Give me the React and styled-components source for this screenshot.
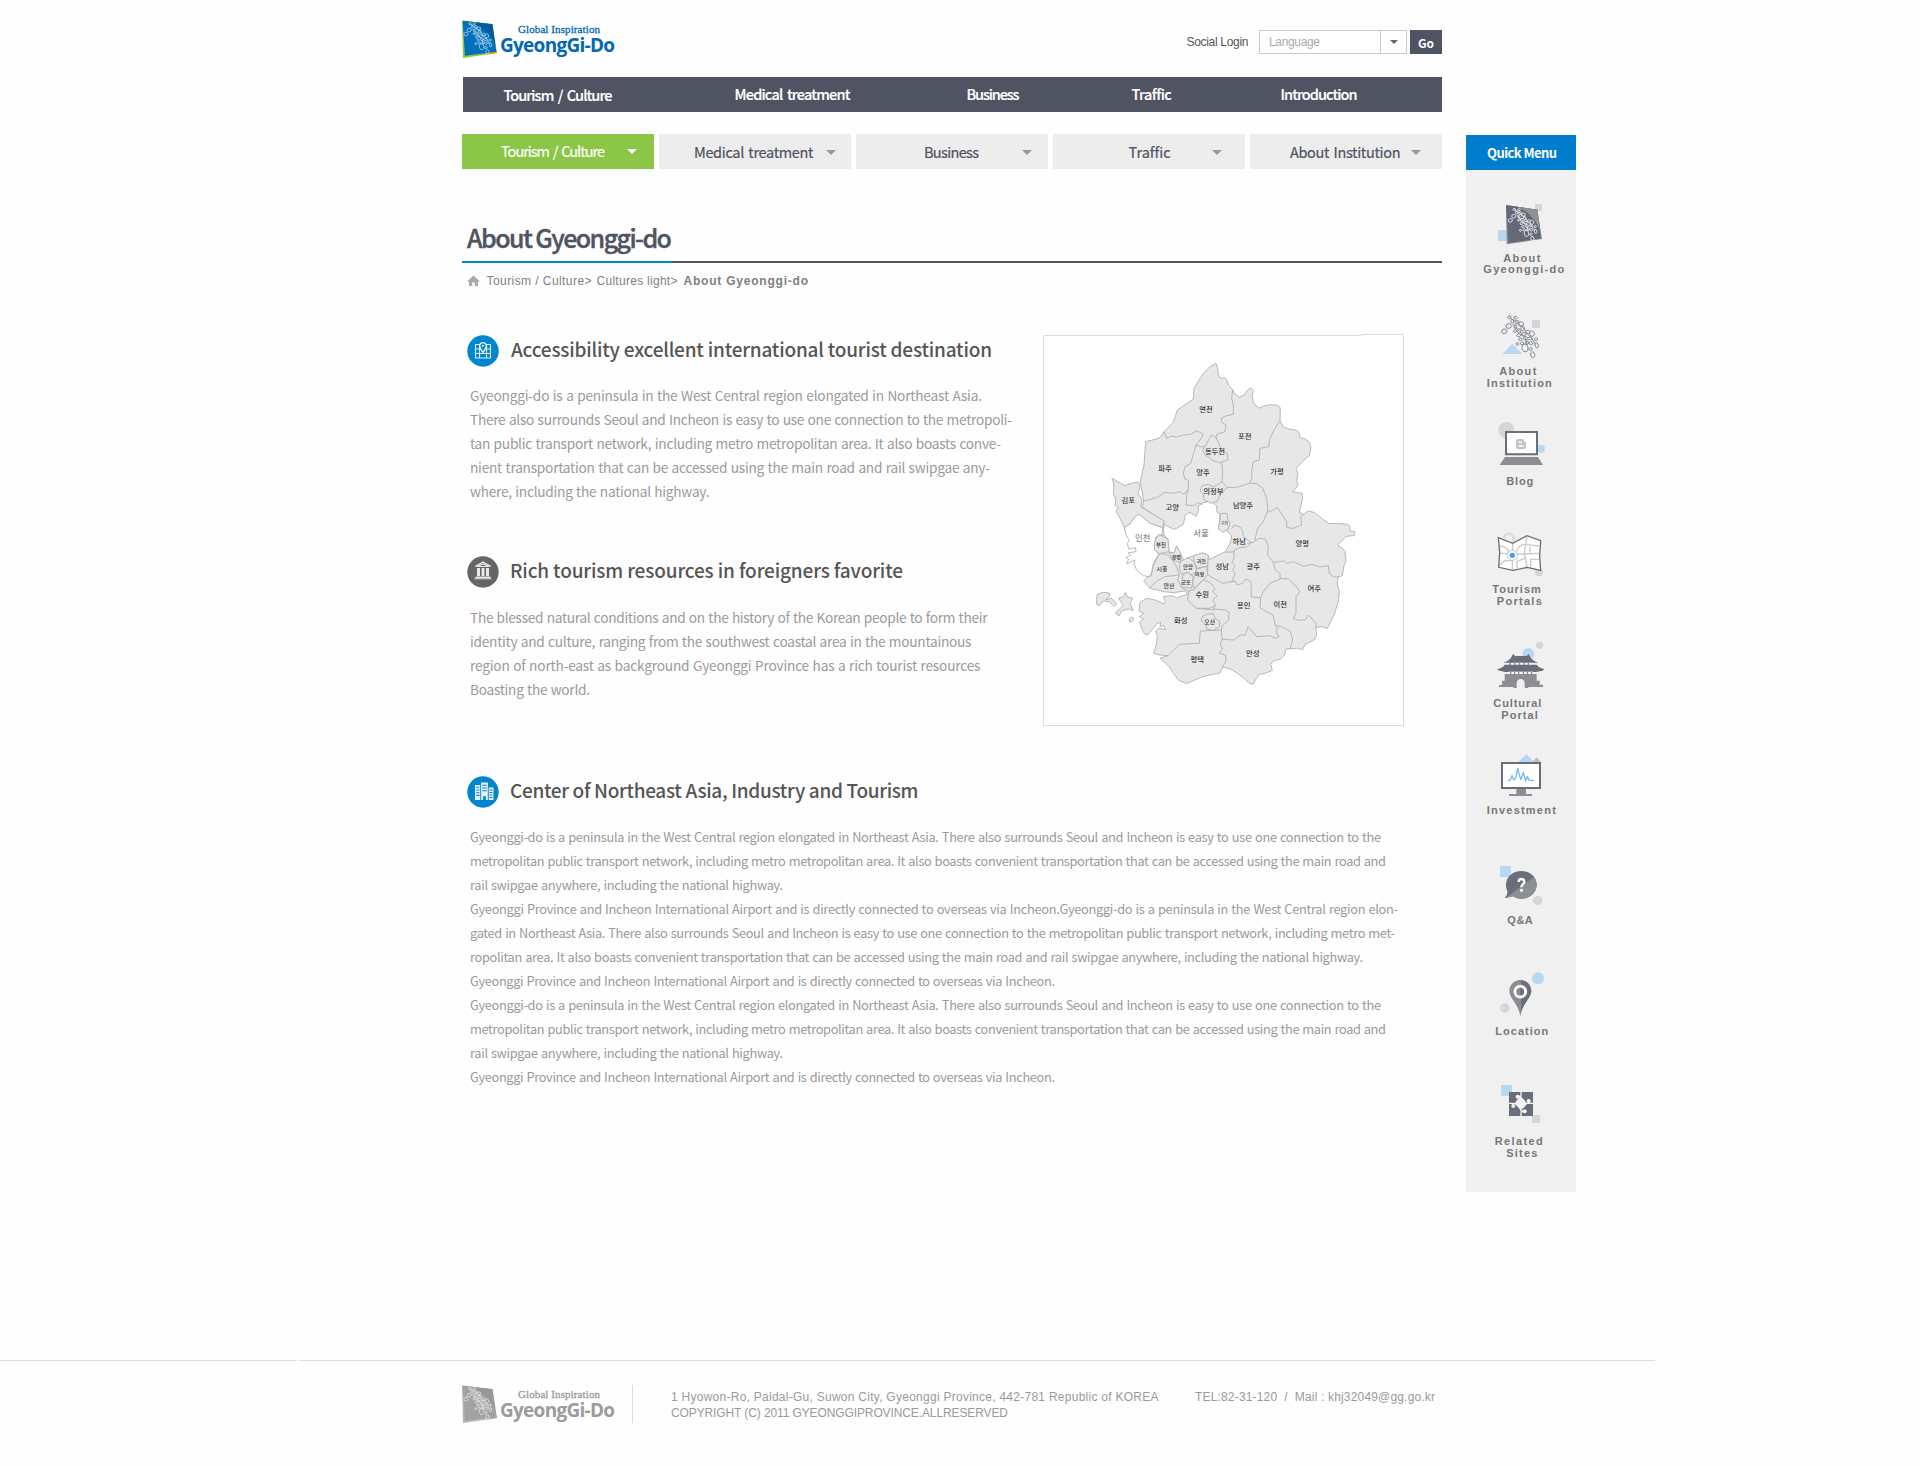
import React, { useLayoutEffect, useRef, useState } from "react";
import styled, { createGlobalStyle } from "styled-components";

const SANS = '"Noto Sans CJK KR", "Noto Sans", sans-serif';
const GULIM = '"Liberation Sans", "Noto Sans CJK KR", sans-serif';
const SLATE = "#4f5362";
const BLUE = "#0085cf";

const Global = createGlobalStyle`
  * { box-sizing: border-box; }
  body { margin: 0; background: #fefefe; font-family: ${SANS}; }
  svg { display: block; flex: none; }
  h1, h2, p { margin: 0; font-weight: inherit; }
`;

/* ---------- text tracked to a fixed measure ---------- */

const Measure = styled.span`
  display: block;
  flex: none;
  width: ${(p) => p.$w}px;
  white-space: pre;
`;

function Fit({ w, children, ...rest }) {
  const ref = useRef(null);
  const [spacing, setSpacing] = useState(0);
  useLayoutEffect(() => {
    const natural = ref.current.getBoundingClientRect().width;
    setSpacing((w - natural) / (children.length - 1));
  }, [w, children]);
  return (
    <Measure $w={w} {...rest}>
      <span ref={ref} style={{ letterSpacing: spacing ? `${spacing}px` : undefined }}>{children}</span>
    </Measure>
  );
}

/* ---------- page frame ---------- */

const Page = styled.div`
  width: 1920px;
  height: 1466px;
  overflow: hidden;
  display: flex;
  flex-direction: column;
`;

const Body = styled.div`
  display: flex;
  height: 1360px;
  padding-left: 462px;
`;

const Main = styled.main`
  width: 980px;
`;

/* ---------- header ---------- */

const Header = styled.header`
  display: flex;
  justify-content: space-between;
  height: 77px;
  padding-top: 20px;
`;

const LogoBox = styled.div`
  display: flex;
  width: 153px;
  height: 39px;
  color: ${(p) => p.$color};
`;

const LogoWords = styled.div`
  padding-left: 2px;
`;

const Motto = styled(Fit)`
  margin: 3px 0 0 18px;
  font: 11px/13px "Liberation Serif", serif;
  -webkit-text-stroke: 0.3px currentColor;
`;

const Brand = styled(Fit)`
  margin-top: -1px;
  font: bold 19px/20px "Open Sans", "Noto Sans", sans-serif;
`;

const Tools = styled.div`
  display: flex;
  align-items: center;
  height: 24px;
  margin-top: 10px;
  font-family: ${GULIM};
`;

const ToolLabel = styled(Fit)`
  margin-right: 10.5px;
  font-size: 12px;
  color: #555;
`;

const Select = styled.div`
  display: flex;
  width: 148px;
  height: 24px;
  margin-right: 3px;
  border: 1px solid #c9c9c9;
  background: #fff;
`;

const SelectValue = styled.div`
  width: 121px;
  padding-left: 9px;
  border-right: 1px solid #c9c9c9;
  font-size: 12px;
  line-height: 22px;
  color: #aaa;
`;

const SelectArrow = styled.div`
  display: flex;
  flex: 1;
  align-items: center;
  justify-content: center;
`;

const GoButton = styled.button`
  width: 32px;
  height: 24px;
  padding: 0;
  border: 0;
  background: ${SLATE};
  color: #fff;
  font: bold 12px/23px ${SANS};
`;

const Triangle = styled.i`
  width: 0;
  height: 0;
  border: solid transparent;
  border-width: ${(p) => p.$h}px ${(p) => p.$w / 2}px 0;
  border-top-color: ${(p) => p.$color};
`;

/* ---------- navigation ---------- */

const Nav = styled.nav`
  display: flex;
  height: 35px;
  margin-left: 1px;
  background: ${SLATE};
  color: #fff;
  font-size: 14.5px;
  font-weight: 500;
  line-height: 33px;
  word-spacing: 2px;
  -webkit-text-stroke: 0.2px currentColor;
`;

const NavItem = styled(Fit)`
  margin-left: ${(p) => p.$gap}px;
  padding-top: ${(p) => p.$drop || 0}px;
`;

const Tabs = styled.nav`
  display: flex;
  gap: 5px;
  margin-top: 22px;
`;

const Tab = styled.div`
  display: flex;
  width: 192px;
  height: 35px;
  padding-left: ${(p) => p.$pad}px;
  padding-top: ${(p) => (p.$active ? 0 : 1)}px;
  background: ${(p) => (p.$active ? "#8bc646" : "#ededed")};
  color: ${(p) => (p.$active ? "#fff" : SLATE)};
  font-size: 14.5px;
  line-height: 33px;
  word-spacing: 1.5px;
  -webkit-text-stroke: 0.2px currentColor;

  i {
    margin: 15px 0 0 ${(p) => p.$arrow}px;
  }
`;

/* ---------- page title ---------- */

const TitleBar = styled.div`
  display: flex;
  height: 94px;
  border-bottom: 2px solid ${SLATE};
`;

const Title = styled.h1`
  width: 210px;
  height: 94px;
  padding: 48px 0 0 5px;
  border-bottom: 2px solid ${BLUE};
  font-size: 25px;
  font-weight: 500;
  line-height: 40px;
  color: ${SLATE};
  -webkit-text-stroke: 0.4px currentColor;
`;

const Crumbs = styled.div`
  display: flex;
  height: 72px;
  padding: 12px 0 0 5px;
  font-family: ${GULIM};
  font-size: 12px;
  line-height: 12px;
  color: #808080;
`;

const Crumb = styled(Fit)`
  margin-left: ${(p) => p.$gap}px;
  font-weight: ${(p) => (p.$current ? "bold" : "normal")};
`;

/* ---------- article ---------- */

const Intro = styled.div`
  display: flex;
  height: 441px;
`;

const IntroText = styled.div`
  width: 581px;
`;

const MapFrame = styled.div`
  margin-top: -1px;
`;

const Section = styled.section`
  height: ${(p) => p.$h || "auto"};
`;

const Heading = styled.div`
  display: flex;
  height: ${(p) => p.$h}px;
  padding-left: 5px;
`;

const HeadingText = styled.h2`
  margin: 0 0 0 ${(p) => p.$gap || 11}px;
  font-size: 19px;
  font-weight: 500;
  line-height: 28px;
  color: #555;
`;

const Paragraph = styled.p`
  padding-left: 8px;
  font-size: ${(p) => p.$size}px;
  line-height: 24px;
  word-spacing: 0.7px;
  color: #9a9a9a;
`;

/* ---------- quick menu ---------- */

const Quick = styled.aside`
  width: 110px;
  height: 1057px;
  margin: 135px 0 0 24px;
  background: #f0f0f0;
`;

const QuickTitle = styled.div`
  height: 35px;
  padding: 1px 0 0 21px;
  background: #007dcc;
  color: #fff;
  font-size: 13px;
  font-weight: 700;
  line-height: 34px;
`;

const QuickItem = styled.div`
  font: bold 11px/${(p) => p.$lh || 12}px ${GULIM};
  color: #777;
`;

const QuickLabel = styled(Fit)`
  margin-left: ${(p) => p.$x - 0.7}px;
`;

/* ---------- footer ---------- */

const Rules = styled.div`
  display: flex;
  gap: 2px;
  width: 1655px;
  height: 1px;
`;

const Rule = styled.div`
  width: ${(p) => p.$w}px;
  background: #dedede;
`;

const Footer = styled.footer`
  display: flex;
  padding: 24px 0 0 462px;
`;

const Address = styled.div`
  display: flex;
  height: 38px;
  margin-left: 17px;
  padding: 4px 0 0 38px;
  border-left: 1px solid #ddd;
  font-family: ${GULIM};
  font-size: 12px;
  line-height: 16px;
  color: #9a9a9a;
`;

const Contact = styled(Fit)`
  margin-left: 36.5px;
`;

/* ---------- drawings ---------- */

const LINKS = [
  [133, 454, 8, 7], [146, 438, 8, 7], [148, 412, 5, 4], [157, 424, 4, 6], [166, 413, 5, 4], [171, 426, 6, 5],
  [183, 432, 8, 6], [166, 440, 4, 6], [188, 445, 5, 8], [165, 453, 4, 4], [177, 453, 5, 7], [176, 466, 6, 4],
  [191, 463, 7, 5], [203, 456, 6, 5], [216, 461, 7, 8], [181, 478, 5, 4], [196, 475, 6, 5], [210, 475, 7, 4],
  [172, 492, 4, 4], [186, 490, 5, 4], [201, 488, 5, 5], [195, 504, 9, 12], [213, 490, 5, 5], [228, 478, 5, 4],
  [230, 496, 5, 8], [212, 507, 5, 4], [218, 524, 6, 9],
];

const Chain = ({ x, y, k, color, fill = "none", sw = 3 }) => (
  <g transform={`translate(${x} ${y}) scale(${k}) translate(-124 -405)`} fill={fill} stroke={color} strokeWidth={sw}>
    {LINKS.map(([cx, cy, rx, ry]) => (
      <ellipse key={`${cx}-${cy}`} cx={cx} cy={cy} rx={rx} ry={ry} transform={`rotate(-15 ${cx} ${cy})`} />
    ))}
    <path fill="none" d="M150 414l20 12 20 18 12 18 14 14 10 18M158 432l20 22 18 20 6 20" />
  </g>
);

function Logo({ grey }) {
  return (
    <LogoBox $color={grey ? "#9b9b9b" : "#0068b5"}>
      <svg width="36" height="39" viewBox="36 59 108 117">
        <path d="M36 60l92 11 13 87-102 15z" fill={grey ? "#b5b5b5" : "#8cc63f"} />
        <path d="M128 100l13 58-30 5z" fill={grey ? "#aaa" : "#f7941d"} />
        <path d="M38 62l89 10 12 82-94 12z" fill={grey ? "#a2a2a2" : "#0070bb"} />
        <path d="M38 62l89 10 8 60C120 90 80 70 38 62z" fill={grey ? "#979797" : "#005a9e"} />
        <Chain x={41} y={64} k={0.76} color={grey ? "#e6e6e6" : "#b9dcf2"} sw={2.8} />
      </svg>
      <LogoWords>
        <Motto w={82}>Global Inspiration</Motto>
        <Brand w={115}>GyeongGi-Do</Brand>
      </LogoWords>
    </LogoBox>
  );
}

const HomeIcon = () => (
  <svg width="13" height="12" viewBox="0 0 13 12" fill="#aaa">
    <path d="M6.500 0.500L0 6.500h2V11h3.200V7.500h2.600V11H11V6.500h2z" />
  </svg>
);

const MapBadge = () => (
  <svg width="32" height="32" viewBox="0 0 32 32">
    <circle cx="16" cy="16" r="15.700" fill={BLUE} />
    <path d="M8.500 9.500h15v13.500h-15zM8.500 14h15M8.500 18.500h15M12.500 9.500V23M19.500 9.500V23" fill="none" stroke="#d9eefa" strokeWidth="1.100" />
    <path d="M16 17.500c-2-3-3.300-4.700-3.300-6.600a3.300 3.300 0 0 1 6.600 0c0 1.900-1.300 3.600-3.300 6.600z" fill={BLUE} stroke="#fff" strokeWidth="1.200" />
    <circle cx="16" cy="10.700" r="1" fill="#fff" />
  </svg>
);

const MuseumBadge = () => (
  <svg width="32" height="32" viewBox="0 0 32 32">
    <circle cx="16" cy="16" r="15.700" fill="#656565" />
    <path d="M8 10.500L16 6l8 4.500M10 10.500L16 8l6 2.500z" fill="none" stroke="#e8e8e8" strokeWidth="1.200" />
    <path d="M10 12h3v8h-3zM14.500 12h3v8h-3zM19 12h3v8h-3zM8.500 20.500h15V22h-15zM7.500 22.300h17v1h-17z" fill="#e8e8e8" />
  </svg>
);

const CityBadge = () => (
  <svg width="32" height="32" viewBox="0 0 32 32">
    <circle cx="16" cy="16" r="15.700" fill={BLUE} />
    <path d="M8 9h5.500v15H8zM14 6.500h7V24h-7zM21.500 11.500h5V24h-5z" fill="#e4f3fb" />
    <path d="M9.200 11.300h3.300M9.200 14h3.300M9.200 16.700h3.300M9.200 19.400h3.300M15.200 9.300h4.600M15.200 12h4.600M15.200 14.700h4.600M22.500 14h3M22.500 16.500h3M22.500 19h3M22.500 21.500h3" stroke={BLUE} strokeWidth="1.100" />
    <path d="M13.700 9v15M21.200 11v13M16.500 24v-3.500h2V24z" stroke={BLUE} strokeWidth="0.700" fill={BLUE} />
  </svg>
);

const PROVINCE =
  "M528 115L533 130 535 148 541 160 555 158 562 168 566 182 578 194 584 206 598 217 612 210 622 196 632 188 640 196 637 212 640 232 656 250 668 244 690 239 712 241 721 248 720 288 730 306 748 312 770 316 778 324 780 338 795 342 808 352 813 368 808 392 795 402 778 420 768 430 774 448 770 466 774 482 758 500 786 505 788 520 782 545 778 562 790 568 805 558 822 562 835 572 850 584 866 595 920 597 930 604 930 618 944 620 942 632 918 634 905 648 892 660 905 668 915 680 918 706 912 722 907 752 894 756 892 780 898 800 895 830 882 870 862 910 845 905 828 908 830 930 822 945 795 958 788 974 772 970 738 972 734 990 722 1002 700 1008 692 1018 697 1036 672 1046 658 1048 648 1062 639 1078 628 1074 600 1050 572 1032 548 1026 540 1044 520 1048 500 1052 480 1058 440 1076 416 1066 400 1045 388 1025 372 1010 360 1000 384 992 358 990 341 985 350 955 352 932 346 918 358 910 376 914 372 902 360 905 362 892 350 896 340 910 322 930 312 925 298 892 310 882 298 875 312 865 297 858 300 832 320 820 350 826 372 838 376 828 370 815 392 812 410 818 443 808 435 798 400 803 372 800 330 790 311 768 320 758 334 752 340 722 358 686 344 676 343 652 355 628 372 632 372 590 306 546 311 528 301 470 312 420 317 350 350 342 362 336 372 320 400 292 412 255 460 222 462 190 490 145 510 125Z";

const SEOUL =
  "M372 598L403 614 430 598 436 570 450 562 468 574 476 556 474 544 488 534 512 528 530 542 531 562 540 568 537 608 560 618 575 632 572 652 556 680 535 690 508 704 503 690 488 684 465 692 443 698 432 708 420 682 410 663 402 684 387 680 384 642 370 628Z";

const INCHEON =
  "M253 608L270 597 285 575 298 568 330 595 368 608 366 628 348 636 343 660 356 688 340 715 334 745 326 755 310 752 290 735 282 718 285 705 270 712 260 716 266 702 258 698 272 690 264 684 288 680 286 668 266 672 262 655 268 646 258 630Z";

const GIMPO =
  "M216 460L255 482 278 474 295 472 300 485 294 505 306 525 302 545 372 588 368 608 330 595 298 568 285 575 270 597 253 608 240 580 228 558 235 548 225 540 228 525 220 505 222 480Z";

const ISLANDS = [
  "M170 822L172 808 188 802 208 804 208 814 198 824 215 820 230 836 222 844 208 830 190 828 178 842 170 838Z",
  "M236 820L250 815 256 802 262 815 278 820 270 835 280 856 265 852 245 858 238 872 226 864 238 852 250 842Z",
];

const DISTRICTS = [
  "M343 652L355 628 384 642 387 680 358 686 344 676Z",
  "M387 682L402 684 410 663 424 690 421 712 398 706Z",
  "M421 710L443 698 462 710 470 735 458 750 440 742 425 748 418 730Z",
  "M430 748L442 742 460 755 455 790 422 785Z",
  "M460 692L488 684 505 690 503 722 472 730 463 712Z",
  "M470 732L500 724 503 750 490 765 462 790 458 770Z",
  "M490 765L510 772 525 790 518 800 532 812 518 825 528 840 510 850 470 850 455 838 443 825 447 797 462 795 470 785Z",
  "M484 888L486 875 500 868 520 866 525 880 540 890 538 905 520 916 500 912 498 897Z",
  "M541 565L562 565 562 580 570 592 565 612 548 622 535 612 540 590Z",
  "M486 482L505 478 520 486 546 470 562 488 540 508 532 528 512 535 492 524 490 508 480 498Z",
  "M497 362L508 340 515 330 528 337 540 365 552 380 562 385 564 404 540 414 515 405 510 398 495 390 488 375Z",
];

const BORDERS =
  "M372 320L380 340 395 333 412 336 430 330 452 328 470 317 490 328 480 345 468 360 458 395 452 415 435 425 430 445 435 462 445 466 445 495 430 508 420 500 400 505 375 502 350 518 311 528" +
  "M468 360L485 366 497 362M578 194L575 220 580 240 580 268 560 272 544 280 545 292 558 300 555 320 530 328 528 340" +
  "M442 495L438 540 462 542 475 533 488 538M545 412L548 440 546 470M560 488L595 486 628 475 650 476 668 490 680 520 684 555 670 590 652 612 645 645" +
  "M721 286L705 310 690 340 686 365 660 370 658 405 640 410 635 440 636 460 628 475" +
  "M684 562L700 555 712 548 722 562 740 590 740 608 760 610 785 600 782 575 790 568" +
  "M575 612L582 600 600 606 608 618 610 635 634 652 622 665 600 668 582 676 582 700 576 712 585 722 578 735 585 745 575 772" +
  "M622 655L640 652 658 640 676 642 685 665 683 690 700 712 732 708 740 715 760 710 790 724 815 718 840 726 865 722 868 745 880 755 894 756" +
  "M700 712L705 735 720 745 720 762 690 775 670 800 662 818 634 816 633 770 618 762 605 776 592 780 585 768 548 775 503 750 503 708M556 682L585 680" +
  "M720 760L745 762 765 780 780 800 768 815 768 865 760 880 778 886 795 884 805 870 828 895 828 908" +
  "M662 818L660 848 680 860 700 870 705 900 712 908 708 920 717 935 706 940 690 932 650 935 625 905 615 930 600 930 582 945 547 943 540 960 548 970 538 985 556 990 558 1008 548 1026" +
  "M708 902L725 905 752 920 758 945 750 972M524 842L520 852 556 855 567 862 566 885 545 905 544 925 548 945" +
  "M384 992L418 958 478 955 481 918 545 915M470 850L524 855" +
  "M358 686L380 688 398 706 410 725 418 750 375 755 350 768 328 790M418 752L412 765 428 790 447 800";

const LABELS = [
  ["연천", 498, 260], ["포천", 614, 343], ["파주", 375, 438], ["동두천", 525, 388], ["가평", 711, 447], ["양주", 489, 451],
  ["김포", 265, 533], ["의정부", 520, 506], ["고양", 397, 554], ["남양주", 609, 550], ["하남", 598, 658], ["양평", 787, 664],
  ["성남", 547, 731], ["광주", 640, 733], ["시흥", 366, 738, 18], ["부천", 363, 666, 16], ["광명", 409, 701, 15], ["안양", 444, 731, 16],
  ["과천", 484, 714, 15], ["의왕", 479, 754, 15], ["군포", 438, 776, 15], ["안산", 387, 789, 18], ["수원", 487, 817], ["여주", 823, 798],
  ["이천", 721, 846], ["용인", 611, 849], ["화성", 422, 895], ["오산", 509, 897, 18], ["평택", 472, 1010], ["안성", 638, 992], ["구리", 553, 599, 12],
];

const ProvinceMap = () => (
  <svg width="361" height="392" viewBox="9 27 1083 1176" fontFamily={SANS} textAnchor="middle">
    <path d="M10.500 31.500H963V28.500H1090.500V1201.500H10.500z" fill="#fff" stroke="#dcdcdc" strokeWidth="3" />
    <g fill="#e7e7e7" stroke="#abaeb1" strokeWidth="2.600" strokeLinejoin="round">
      <path d={PROVINCE} />
      <path d={GIMPO} />
      <path d={INCHEON} fill="#fff" />
      <path d={SEOUL} fill="#fff" />
      <path d={BORDERS} fill="none" />
      {DISTRICTS.map((d) => <path key={d} d={d} />)}
      {ISLANDS.map((d) => <path key={d} d={d} />)}
      <ellipse cx="274" cy="884" rx="5" ry="8" transform="rotate(35 274 884)" />
    </g>
    <g fill="#3a3334" fontWeight="500">
      {LABELS.map(([name, x, y, size = 22]) => (
        <text key={name} x={x} y={y} fontSize={size}>{name}</text>
      ))}
    </g>
    <g fill="#8d8d8d" fontSize="25" fontWeight="500">
      <text x="308" y="648">인천</text>
      <text x="483" y="634">서울</text>
    </g>
  </svg>
);

const INK = "#6a6e7b";
const MID = "#8c8e93";
const SKY = "#b8d8f2";
const FOG = "#d6d6d6";

const QuickArt = ({ y, h, children }) => (
  <svg width="110" height={h / 3} viewBox={`18 ${y} 330 ${h}`}>{children}</svg>
);

const QUICK = [
  {
    y: -30, h: 249, lh: 11, labels: [["About", 38, 37], ["Gyeonggi-do", 18, 81]],
    art: (
      <>
        <path d="M225 72h21v21h-21z" fill={FOG} />
        <path d="M114 150h26v33h-26z" fill={SKY} />
        <path d="M138 75l94 14 14 88-106 16z" fill={MID} />
        <path d="M138 75l94 14 11 86-98 14z" fill="#646977" />
        <path d="M170 80l62 9 9 64C225 115 205 95 170 80z" fill="#8f9196" />
        <Chain x={144} y={83} k={0.78} color="#f2f2f2" />
      </>
    ),
  },
  {
    y: 285, h: 270, labels: [["About", 34, 37], ["Institution", 21.5, 65]],
    art: (
      <>
        <path d="M216 420h24v24h-24z" fill={FOG} />
        <path d="M157 491l30 31h-60z" fill={SKY} />
        <Chain x={124} y={405} k={1} color="#7a7e8a" fill="#f5f5f5" sw={2.6} />
      </>
    ),
  },
  {
    y: 627, h: 258, labels: [["Blog", 41, 27]],
    art: (
      <>
        <circle cx="139" cy="750" r="24" fill={FOG} />
        <circle cx="243" cy="806" r="12" fill={SKY} />
        <path d="M138 756h93v67h-93z" fill="#fefefe" stroke={INK} strokeWidth="6" />
        <path d="M135 831h99l15 24H119z" fill={MID} />
        <rect x="168" y="777" width="30" height="31" rx="9" fill="#c2c3c8" />
        <path d="M190 775h10v12h-6q-1-5-4-7z" fill="#fefefe" />
        <path d="M177 787h7M177 798h12" fill="none" stroke="#fff" strokeWidth="4.500" strokeLinecap="round" />
      </>
    ),
  },
  {
    y: -39, h: 288, labels: [["Tourism", 27, 48.5], ["Portals", 31.5, 45]],
    art: (
      <>
        <circle cx="147" cy="116" r="15" fill="none" stroke="#dedede" strokeWidth="9" />
        <circle cx="237" cy="217" r="12" fill={FOG} />
        <path d="M115 113l43 17 43-23 41 15-3 46 3 43-40-9-43 9-43-9 3-45z" fill="#fff" />
        <path d="M158 130l-1 80M201 108l-8 50 8 44M118 160l74 2 46-2M118 138q25 2 28 20M118 195l15-12 22-2 2-20M172 205l-2-20 24-10M170 155q5-22 26-22l40 5M210 158v-18M212 203v-25h26" fill="none" stroke="#c9c9c9" strokeWidth="4" />
        <path d="M115 113l43 17 43-23 41 15-3 46 3 43-40-9-43 9-43-9 3-45z" fill="none" stroke={INK} strokeWidth="4" />
        <circle cx="157" cy="166" r="15" fill="#fff" stroke="#b9c7d4" strokeWidth="3" />
        <circle cx="157" cy="166" r="8" fill="#4a9ee0" />
      </>
    ),
  },
  {
    y: 321, h: 270, labels: [["Cultural", 28, 48], ["Portal", 36, 36.5]],
    art: (
      <>
        <circle cx="239" cy="436" r="11" fill={FOG} />
        <circle cx="205" cy="462" r="18" fill={SKY} />
        <path d="M160 462q4 8 10 6h26q8 0 9-6 4 2 6 10 8 12 24 16h-106q18-4 25-16 3-8 6-10z" fill={INK} />
        <path d="M147 489h70v9h-70z" fill="#fafafa" />
        <path d="M134 494h96q4 8 23 13-4 7-13 7l-12 2h-93l-12-3q-8 0-12-5 18-5 23-14z" fill={INK} />
        <path d="M148 487h5v8h-5zM162 487h4v8h-4zM176 487h4v8h-4zM190 487h4v8h-4zM203 487h4v8h-4z" fill={MID} />
        <path d="M146 515h74v7h-74z" fill="#fafafa" />
        <path d="M150 515h4v7h-4zM162 515h4v7h-4zM174 515h4v7h-4zM188 515h4v7h-4zM200 515h4v7h-4zM213 515h4v7h-4z" fill={MID} />
        <path d="M134 522h96v20h9v12h10v7h-44v3h-11v-16q-2-11-12-11t-12 11v16h-10v-3h-43v-6h9v-13h8z" fill={MID} />
      </>
    ),
  },
  {
    y: 663, h: 249, labels: [["Investment", 21.5, 69]],
    art: (
      <>
        <path d="M199 762l26 26h-52z" fill={SKY} />
        <path d="M230 772l15 16h-30z" fill="#bcbcbc" />
        <path d="M126 789h114v75H126z" fill="#fff" stroke={INK} strokeWidth="6" />
        <path d="M143 841h8l5-14 5 13 6-5 6-30 9 34 8-22 7 26 5-14 6 12h14" fill="none" stroke="#74bdf2" strokeWidth="4" strokeLinejoin="round" />
        <path d="M169 867h29v15h18v6h-69v-6h22z" fill={MID} />
      </>
    ),
  },
  {
    y: -42, h: 294, labels: [["Q&A", 42, 25.5]],
    art: (
      <>
        <path d="M120 108h33v33h-33z" fill={SKY} />
        <circle cx="233" cy="212" r="14" fill={FOG} />
        <path d="M184 123c26 0 46 18 46 41s-20 42-46 42c-10 0-18-3-25-7l-25 6q10-12 8-22c-3-6-4-12-4-19 0-23 20-41 46-41z" fill={INK} />
        <path d="M222 140c5 7 8 15 8 24 0 23-20 42-46 42-10 0-18-3-25-7l-22 5z" fill={MID} />
        <path d="M176 156q0-9 8-9 9 0 9 8 0 5-5 8-4 3-4 9" fill="none" stroke="#fff" strokeWidth="7" />
        <path d="M180 177h9v8h-9z" fill="#fff" />
      </>
    ),
  },
  {
    y: 288, h: 297, labels: [["Location", 30, 53]],
    art: (
      <>
        <circle cx="234" cy="445" r="18" fill={SKY} />
        <circle cx="134" cy="534" r="14" fill={FOG} />
        <path d="M181 450c-19 0-33 15-33 33 0 22 27 38 33 76z" fill={MID} />
        <path d="M181 450c19 0 33 15 33 33 0 22-27 38-33 76z" fill={INK} />
        <circle cx="181" cy="485" r="16" fill={INK} stroke="#fff" strokeWidth="9" />
        <path d="M181 474a11 11 0 0 0 0 22z" fill={MID} />
      </>
    ),
  },
  {
    y: 621, h: 294, labels: [["Related", 29.5, 48], ["Sites", 41, 31]],
    art: (
      <>
        <path d="M123 765h33v33h-33z" fill={SKY} />
        <path d="M216 855h24v24h-24z" fill={FOG} />
        <path d="M147 786h72v72h-72z" fill={INK} />
        <g fill="#f5f5f5">
          <path d="M181 786h4v16l8 8 6 8h20v4h-18l-8 10-8 6v20h-4v-18l-8-10-8-8h-18v-4h18l8-10 8-6z" />
          <circle cx="173" cy="800" r="6" />
          <circle cx="194" cy="844" r="6" />
          <circle cx="160" cy="828" r="6" />
          <circle cx="206" cy="813" r="6" />
          <path d="M173 797h10v6h-10zM184 841h10v6h-10zM157 820h6v8h-6zM203 812h6v8h-6z" />
        </g>
        <g fill={INK}>
          <circle cx="190" cy="799" r="5" />
          <circle cx="176" cy="845" r="5" />
          <circle cx="161" cy="813" r="5" />
          <circle cx="206" cy="827" r="5" />
        </g>
      </>
    ),
  },
];

/* ---------- content ---------- */

const NAV = [
  ["Tourism / Culture", 40.5, 109, 1], ["Medical treatment", 122, 116], ["Business", 116, 53],
  ["Traffic", 112, 40], ["Introduction", 109, 77],
];

const TABS = [
  ["Tourism / Culture", 39, 104, 21.5, true], ["Medical treatment", 35, 119.5, 12.5], ["Business", 68, 55, 43],
  ["Traffic", 75.5, 42, 41.5], ["About Institution", 40, 110.5, 10.5],
];

const ACCESS = [
  ["Gyeonggi-do is a peninsula in the West Central region elongated in Northeast Asia.", 512],
  ["There also surrounds Seoul and Incheon is easy to use one connection to the metropoli-", 542],
  ["tan public transport network, including metro metropolitan area. It also boasts conve-", 531],
  ["nient transportation that can be accessed using the main road and rail swipgae any-", 520],
  ["where, including the national highway.", 239.5],
];

const RESOURCES = [
  ["The blessed natural conditions and on the history of the Korean people to form their", 517.5],
  ["identity and culture, ranging from the southwest coastal area in the mountainous", 501.5],
  ["region of north-east as background Gyeonggi Province has a rich tourist resources", 510.5],
  ["Boasting the world.", 120],
];

const CENTER = [
  ["Gyeonggi-do is a peninsula in the West Central region elongated in Northeast Asia. There also surrounds Seoul and Incheon is easy to use one connection to the", 911],
  ["metropolitan public transport network, including metro metropolitan area. It also boasts convenient transportation that can be accessed using the main road and", 916],
  ["rail swipgae anywhere, including the national highway.", 313],
  ["Gyeonggi Province and Incheon International Airport and is directly connected to overseas via Incheon.Gyeonggi-do is a peninsula in the West Central region elon-", 928],
  ["gated in Northeast Asia. There also surrounds Seoul and Incheon is easy to use one connection to the metropolitan public transport network, including metro met-", 925],
  ["ropolitan area. It also boasts convenient transportation that can be accessed using the main road and rail swipgae anywhere, including the national highway.", 893],
  ["Gyeonggi Province and Incheon International Airport and is directly connected to overseas via Incheon.", 585],
  ["Gyeonggi-do is a peninsula in the West Central region elongated in Northeast Asia. There also surrounds Seoul and Incheon is easy to use one connection to the", 911],
  ["metropolitan public transport network, including metro metropolitan area. It also boasts convenient transportation that can be accessed using the main road and", 916],
  ["rail swipgae anywhere, including the national highway.", 313],
  ["Gyeonggi Province and Incheon International Airport and is directly connected to overseas via Incheon.", 585],
];

const Copy = ({ lines, size }) => (
  <Paragraph $size={size}>
    {lines.map(([text, w], i) => <Fit key={i} w={w}>{text}</Fit>)}
  </Paragraph>
);

export default function App() {
  return (
    <Page>
      <Global />
      <Body>
        <Main>
          <Header>
            <Logo />
            <Tools>
              <ToolLabel w={62}>Social Login</ToolLabel>
              <Select>
                <SelectValue><Fit w={51}>Language</Fit></SelectValue>
                <SelectArrow><Triangle $w={8} $h={4.5} $color="#666" /></SelectArrow>
              </Select>
              <GoButton>Go</GoButton>
            </Tools>
          </Header>
          <Nav>
            {NAV.map(([text, gap, w, drop]) => <NavItem key={text} $gap={gap} $drop={drop} w={w}>{text}</NavItem>)}
          </Nav>
          <Tabs>
            {TABS.map(([text, pad, w, arrow, active]) => (
              <Tab key={text} $pad={pad} $arrow={arrow} $active={active}>
                <Fit w={w}>{text}</Fit>
                <Triangle $w={10} $h={5} $color={active ? "#fff" : "#999"} />
              </Tab>
            ))}
          </Tabs>
          <TitleBar>
            <Title><Fit w={205}>About Gyeonggi-do</Fit></Title>
          </TitleBar>
          <Crumbs>
            <HomeIcon />
            <Crumb $gap={6.5} w={105}>{"Tourism / Culture>"}</Crumb>
            <Crumb $gap={5} w={81}>{"Cultures light>"}</Crumb>
            <Crumb $gap={6} w={124.5} $current>About Gyeonggi-do</Crumb>
          </Crumbs>
          <Intro>
            <IntroText>
              <Section $h="221px">
                <Heading $h={48}>
                  <MapBadge />
                  <HeadingText $gap={12}><Fit w={481}>Accessibility excellent international tourist destination</Fit></HeadingText>
                </Heading>
                <Copy lines={ACCESS} size={13.7} />
              </Section>
              <Section>
                <Heading $h={49}>
                  <MuseumBadge />
                  <HeadingText><Fit w={393}>Rich tourism resources in foreigners favorite</Fit></HeadingText>
                </Heading>
                <Copy lines={RESOURCES} size={13.7} />
              </Section>
            </IntroText>
            <MapFrame>
              <ProvinceMap />
            </MapFrame>
          </Intro>
          <Section>
            <Heading $h={49}>
              <CityBadge />
              <HeadingText><Fit w={408.5}>Center of Northeast Asia, Industry and Tourism</Fit></HeadingText>
            </Heading>
            <Copy lines={CENTER} size={12.8} />
          </Section>
        </Main>
        <Quick>
          <QuickTitle><Fit w={70}>Quick Menu</Fit></QuickTitle>
          {QUICK.map(({ y, h, lh, labels, art }) => (
            <QuickItem key={labels[0][0] + h + y} $lh={lh}>
              <QuickArt y={y} h={h}>{art}</QuickArt>
              {labels.map(([text, x, w]) => <QuickLabel key={text} $x={x} w={w}>{text}</QuickLabel>)}
            </QuickItem>
          ))}
        </Quick>
      </Body>
      <Rules>
        <Rule $w={297} />
        <Rule $w={1356} />
      </Rules>
      <Footer>
        <Logo grey />
        <Address>
          <div>
            <Fit w={487.5}>1 Hyowon-Ro, Paldal-Gu, Suwon City, Gyeonggi Province, 442-781 Republic of KOREA</Fit>
            <Fit w={337}>COPYRIGHT (C) 2011 GYEONGGIPROVINCE.ALLRESERVED</Fit>
          </div>
          <Contact w={240}>{"TEL:82-31-120  /  Mail : khj32049@gg.go.kr"}</Contact>
        </Address>
      </Footer>
    </Page>
  );
}
